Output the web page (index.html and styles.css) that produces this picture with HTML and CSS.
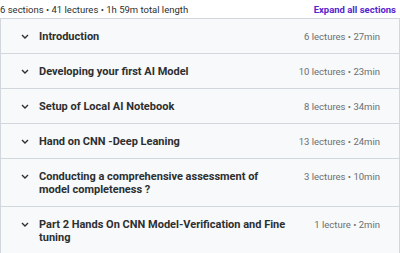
FILE: index.html
```html
<!DOCTYPE html>
<html>
<head>
<meta charset="utf-8">
<link rel="stylesheet" href="styles.css">
</head>
<body>
<div class="curriculum">
  <div class="summary">
    <span class="stats">6 sections • 41 lectures • 1h 59m total length</span>
    <button class="expand">Expand all sections</button>
  </div>
  <div class="panel">
    <div class="section">
      <svg class="chev" viewBox="0 0 8 5"><path d="M1 1l3 3 3-3"/></svg>
      <span class="title">Introduction</span>
      <span class="meta">6 lectures • 27min</span>
    </div>
    <div class="section">
      <svg class="chev" viewBox="0 0 8 5"><path d="M1 1l3 3 3-3"/></svg>
      <span class="title">Developing your first AI Model</span>
      <span class="meta">10 lectures • 23min</span>
    </div>
    <div class="section">
      <svg class="chev" viewBox="0 0 8 5"><path d="M1 1l3 3 3-3"/></svg>
      <span class="title">Setup of Local AI Notebook</span>
      <span class="meta">8 lectures • 34min</span>
    </div>
    <div class="section">
      <svg class="chev" viewBox="0 0 8 5"><path d="M1 1l3 3 3-3"/></svg>
      <span class="title">Hand on CNN -Deep Leaning</span>
      <span class="meta">13 lectures • 24min</span>
    </div>
    <div class="section">
      <svg class="chev" viewBox="0 0 8 5"><path d="M1 1l3 3 3-3"/></svg>
      <span class="title">Conducting a comprehensive assessment of model completeness ?</span>
      <span class="meta">3 lectures • 10min</span>
    </div>
    <div class="section">
      <svg class="chev" viewBox="0 0 8 5"><path d="M1 1l3 3 3-3"/></svg>
      <span class="title">Part 2 Hands On CNN Model-Verification and Fine tuning</span>
      <span class="meta">1 lecture • 2min</span>
    </div>
  </div>
</div>
</body>
</html>
```

FILE: styles.css
```css
* { box-sizing: border-box; }
body {
  margin: 0;
  background: #fff;
  font-family: Roboto, "Liberation Sans", sans-serif;
  color: #2d2f31;
  overflow: hidden;
}
.summary {
  height: 18px;
  display: flex;
  justify-content: space-between;
  align-items: center;
  padding-right: 4px;
}
.stats {
  font-size: 9.5px;
  color: #2d2f31;
}
.expand {
  border: 0;
  background: none;
  padding: 0;
  font-family: inherit;
  font-size: 9.5px;
  font-weight: 700;
  color: #5624d0;
}
.panel {
  border: 1px solid #d1d7dc;
  border-bottom: 0;
}
.section {
  display: flex;
  align-items: flex-start;
  background: #f7f9fa;
  border-bottom: 1px solid #d1d7dc;
  padding: 11px 19px 10px 20px;
}
.chev {
  width: 8px;
  height: 5px;
  flex: none;
  margin: 4px 10px 0 0;
  fill: none;
  stroke: #2d2f31;
  stroke-width: 1.4;
}
.title {
  flex: 0 1 250px;
  font-size: 11px;
  line-height: 13px;
  font-weight: 700;
}
.meta {
  margin-left: auto;
  font-size: 9.5px;
  line-height: 13px;
  color: #6a6f73;
  white-space: nowrap;
}
```
